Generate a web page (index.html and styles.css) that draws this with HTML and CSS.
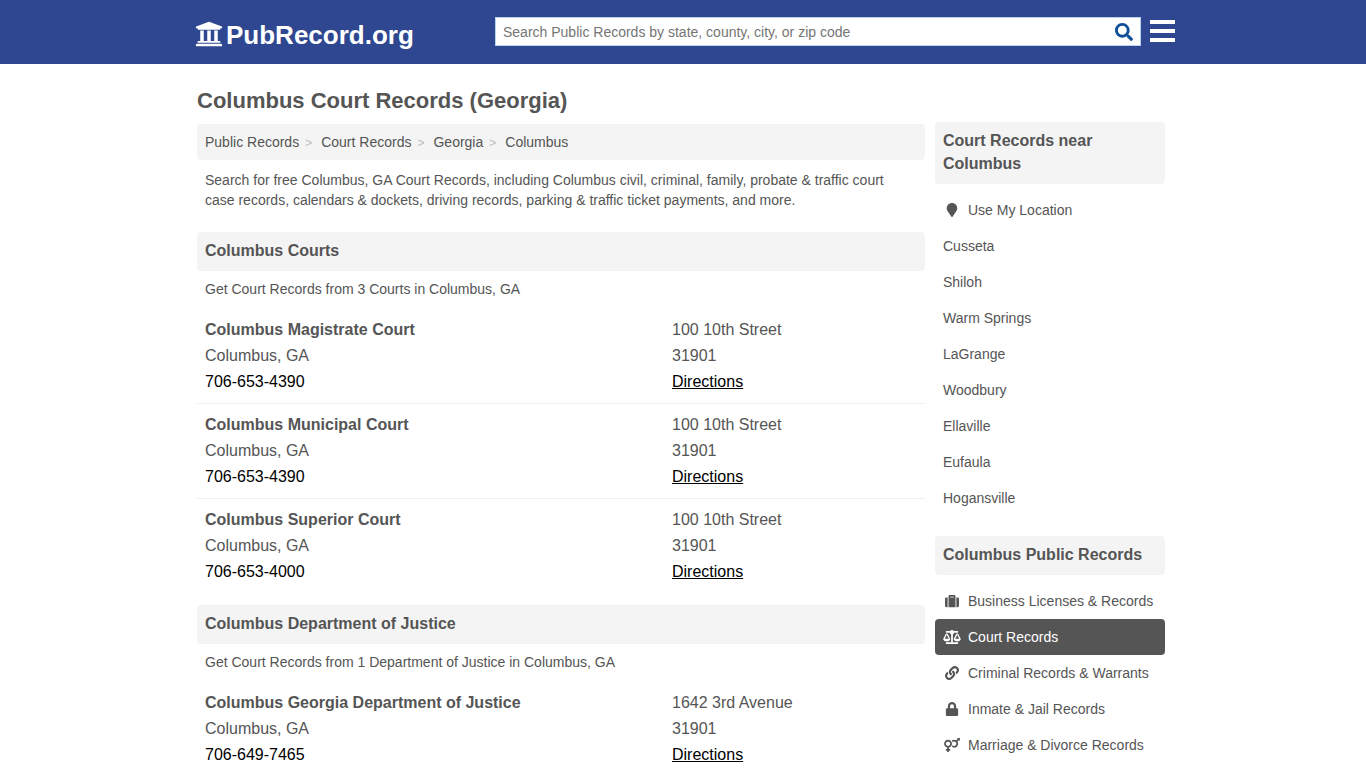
FILE: index.html
```html
<!DOCTYPE html>
<html lang="en">
<head>
<meta charset="utf-8">
<title>Columbus Court Records (Georgia)</title>
<meta name="viewport" content="width=device-width, initial-scale=1">
<link rel="stylesheet" href="styles.css">
</head>
<body>
<header class="site-header">
  <div class="header-inner">
    <a class="logo" href="#">
      <svg class="logo-icon" viewBox="0 0 512 512" aria-hidden="true"><path d="M496 128v16a8 8 0 0 1-8 8h-24v12c0 6.627-5.373 12-12 12H60c-6.627 0-12-5.373-12-12v-12H24a8 8 0 0 1-8-8v-16a8 8 0 0 1 4.941-7.392l232-88a7.996 7.996 0 0 1 6.118 0l232 88A8 8 0 0 1 496 128zm-24 304H40c-13.255 0-24 10.745-24 24v16a8 8 0 0 0 8 8h464a8 8 0 0 0 8-8v-16c0-13.255-10.745-24-24-24zM96 192v192H60c-6.627 0-12 5.373-12 12v20h416v-20c0-6.627-5.373-12-12-12h-36V192h-64v192h-64V192h-64v192h-64V192H96z"/></svg>
      <span>PubRecord.org</span>
    </a>
    <form class="search" role="search">
      <input class="search-input" type="text" aria-label="Search Public Records" placeholder="Search Public Records by state, county, city, or zip code">
      <button class="search-button" type="button" aria-label="Search">
        <svg class="search-icon" viewBox="0 0 512 512" aria-hidden="true"><path d="M505 442.7L405.3 343c-4.5-4.5-10.6-7-17-7H372c27.6-35.3 44-79.7 44-128C416 93.1 322.9 0 208 0S0 93.1 0 208s93.1 208 208 208c48.3 0 92.7-16.4 128-44v16.3c0 6.4 2.5 12.5 7 17l99.7 99.7c9.4 9.4 24.6 9.4 33.9 0l28.3-28.3c9.4-9.4 9.4-24.6.1-34zM208 336c-70.7 0-128-57.2-128-128 0-70.7 57.2-128 128-128 70.7 0 128 57.2 128 128 0 70.7-57.2 128-128 128z"/></svg>
      </button>
    </form>
    <button class="menu-button" type="button" aria-label="Menu">
      <svg class="menu-icon" viewBox="0 0 25 22" aria-hidden="true"><path d="M0 0h25v4H0zM0 9h25v4H0zM0 18h25v4H0z"/></svg>
    </button>
  </div>
</header>

<div class="page">
  <main class="main">
    <h1 class="title">Columbus Court Records (Georgia)</h1>
    <nav class="breadcrumb" aria-label="Breadcrumb">
      <a href="#">Public Records</a>
      <a href="#">Court Records</a>
      <a href="#">Georgia</a>
      <a href="#">Columbus</a>
    </nav>
    <p class="text">Search for free Columbus, GA Court Records, including Columbus civil, criminal, family, probate &amp; traffic court case records, calendars &amp; dockets, driving records, parking &amp; traffic ticket payments, and more.</p>

    <section class="section">
      <h2 class="heading">Columbus Courts</h2>
      <p class="text">Get Court Records from 3 Courts in Columbus, GA</p>
      <div class="listing">
        <article class="entry">
          <div><h3 class="name">Columbus Magistrate Court</h3><p>Columbus, GA</p><a class="phone" href="#">706-653-4390</a></div>
          <div><p>100 10th Street</p><p>31901</p><a class="directions" href="#">Directions</a></div>
        </article>
        <article class="entry">
          <div><h3 class="name">Columbus Municipal Court</h3><p>Columbus, GA</p><a class="phone" href="#">706-653-4390</a></div>
          <div><p>100 10th Street</p><p>31901</p><a class="directions" href="#">Directions</a></div>
        </article>
        <article class="entry">
          <div><h3 class="name">Columbus Superior Court</h3><p>Columbus, GA</p><a class="phone" href="#">706-653-4000</a></div>
          <div><p>100 10th Street</p><p>31901</p><a class="directions" href="#">Directions</a></div>
        </article>
      </div>
    </section>

    <section class="section">
      <h2 class="heading">Columbus Department of Justice</h2>
      <p class="text">Get Court Records from 1 Department of Justice in Columbus, GA</p>
      <div class="listing">
        <article class="entry">
          <div><h3 class="name">Columbus Georgia Department of Justice</h3><p>Columbus, GA</p><a class="phone" href="#">706-649-7465</a></div>
          <div><p>1642 3rd Avenue</p><p>31901</p><a class="directions" href="#">Directions</a></div>
        </article>
      </div>
    </section>
  </main>

  <aside class="sidebar">
    <section>
      <h2 class="heading">Court Records near Columbus</h2>
      <nav class="links" aria-label="Nearby places">
        <a class="link" href="#"><svg class="icon" viewBox="-64 0 512 512" aria-hidden="true"><path d="M172.268 501.67C26.97 291.031 0 269.413 0 192 0 85.961 85.961 0 192 0s192 85.961 192 192c0 77.413-26.97 99.031-172.268 309.67-9.535 13.774-29.93 13.773-39.464 0z"/></svg>Use My Location</a>
        <a class="link" href="#">Cusseta</a>
        <a class="link" href="#">Shiloh</a>
        <a class="link" href="#">Warm Springs</a>
        <a class="link" href="#">LaGrange</a>
        <a class="link" href="#">Woodbury</a>
        <a class="link" href="#">Ellaville</a>
        <a class="link" href="#">Eufaula</a>
        <a class="link" href="#">Hogansville</a>
      </nav>
    </section>
    <section>
      <h2 class="heading">Columbus Public Records</h2>
      <nav class="links" aria-label="Public records">
        <a class="link" href="#"><svg class="icon" viewBox="0 0 512 512" aria-hidden="true"><path d="M128 480h256V80c0-26.5-21.5-48-48-48H176c-26.5 0-48 21.5-48 48v400zm64-384h128v32H192V96zm320 80v256c0 26.5-21.5 48-48 48h-48V128h48c26.5 0 48 21.5 48 48zM96 480H48c-26.5 0-48-21.5-48-48V176c0-26.5 21.5-48 48-48h48v352z"/></svg>Business Licenses &amp; Records</a>
        <a class="link link-active" href="#" aria-current="page"><svg class="icon" viewBox="0 0 640 512" aria-hidden="true"><path d="M256 336h-.02c0-16.18 1.34-8.73-85.05-181.51-17.65-35.29-68.19-35.36-85.87 0C-2.06 328.75.02 320.33.02 336H0c0 44.18 57.31 80 128 80s128-35.82 128-80zM128 176l72 144H56l72-144zm511.98 160c0-16.18 1.34-8.73-85.05-181.51-17.65-35.29-68.19-35.36-85.87 0-87.12 174.26-85.04 165.84-85.04 181.51H384c0 44.18 57.31 80 128 80s128-35.82 128-80h-.02zM440 320l72-144 72 144H440zm88 128H352V153.25c23.51-10.29 41.16-31.48 46.39-57.25H528c8.84 0 16-7.16 16-16V48c0-8.84-7.16-16-16-16H383.64C369.04 12.68 346.09 0 320 0s-49.04 12.68-63.64 32H112c-8.84 0-16 7.16-16 16v32c0 8.84 7.16 16 16 16h129.61c5.23 25.76 22.87 46.96 46.39 57.25V448H112c-8.84 0-16 7.16-16 16v32c0 8.84 7.16 16 16 16h416c8.84 0 16-7.16 16-16v-32c0-8.84-7.16-16-16-16z"/></svg>Court Records</a>
        <a class="link" href="#"><svg class="icon" viewBox="0 0 512 512" aria-hidden="true"><path d="M326.612 185.391c59.747 59.809 58.927 155.698.36 214.59-.11.12-.24.25-.36.37l-67.2 67.2c-59.27 59.27-155.699 59.262-214.96 0-59.27-59.26-59.27-155.7 0-214.96l37.106-37.106c9.84-9.84 26.786-3.3 27.294 10.606.648 17.722 3.826 35.527 9.69 52.721 1.986 5.822.567 12.262-3.783 16.612l-13.087 13.087c-28.026 28.026-28.905 73.66-1.155 101.96 28.024 28.579 74.086 28.749 102.325.51l67.2-67.19c28.191-28.191 28.073-73.757 0-101.83-3.701-3.694-7.429-6.564-10.341-8.569a16.037 16.037 0 0 1-6.947-12.606c-.396-10.567 3.348-21.456 11.698-29.806l21.054-21.055c5.521-5.521 14.182-6.199 20.584-1.731a152.482 152.482 0 0 1 20.522 17.197zM467.547 44.449c-59.261-59.262-155.69-59.27-214.96 0l-67.2 67.2c-.12.12-.25.25-.36.37-58.566 58.892-59.387 154.781.36 214.59a152.454 152.454 0 0 0 20.521 17.196c6.402 4.468 15.064 3.789 20.584-1.731l21.054-21.055c8.35-8.35 12.094-19.239 11.698-29.806a16.037 16.037 0 0 0-6.947-12.606c-2.912-2.005-6.64-4.875-10.341-8.569-28.073-28.073-28.191-73.639 0-101.83l67.2-67.19c28.239-28.239 74.3-28.069 102.325.51 27.75 28.3 26.872 73.934-1.155 101.96l-13.087 13.087c-4.35 4.35-5.769 10.79-3.783 16.612 5.864 17.194 9.042 34.999 9.69 52.721.509 13.906 17.454 20.446 27.294 10.606l37.106-37.106c59.271-59.259 59.271-155.699.001-214.959z"/></svg>Criminal Records &amp; Warrants</a>
        <a class="link" href="#"><svg class="icon" viewBox="-32 0 512 512" aria-hidden="true"><path d="M400 224h-24v-72C376 68.2 307.8 0 224 0S72 68.2 72 152v72H48c-26.5 0-48 21.5-48 48v192c0 26.5 21.5 48 48 48h352c26.5 0 48-21.5 48-48V272c0-26.5-21.5-48-48-48zm-104 0H152v-72c0-39.7 32.3-72 72-72s72 32.3 72 72v72z"/></svg>Inmate &amp; Jail Records</a>
        <a class="link" href="#"><svg class="icon" viewBox="0 0 576 512" aria-hidden="true"><path d="M564 0h-79c-10.7 0-16 12.9-8.5 20.5l16.9 16.9-48.7 48.7C422.5 72.1 396.2 64 368 64c-33.7 0-64.6 11.6-89.2 30.9 14 16.7 25 36 32.1 57.1 14.5-14.8 34.7-24 57.1-24 44.1 0 80 35.9 80 80s-35.9 80-80 80c-22.3 0-42.6-9.2-57.1-24-7.1 21.1-18 40.4-32.1 57.1 24.5 19.4 55.5 30.9 89.2 30.9 79.5 0 144-64.5 144-144 0-28.2-8.1-54.5-22.1-76.7l48.7-48.7 16.9 16.9c2.4 2.4 5.4 3.5 8.4 3.5 6.2 0 12.1-4.8 12.1-12V12c0-6.6-5.4-12-12-12zM144 64C64.5 64 0 128.5 0 208c0 68.5 47.9 125.9 112 140.4V400H76c-6.600 0-12 5.400-12 12v40c0 6.600 5.400 12 12 12h36v36c0 6.600 5.400 12 12 12h40c6.600 0 12-5.400 12-12v-36h36c6.600 0 12-5.400 12-12v-40c0-6.600-5.400-12-12-12h-36v-51.600c64.100-14.600 112-71.900 112-140.400 0-79.500-64.500-144-144-144zm0 224c-44.100 0-80-35.900-80-80s35.900-80 80-80 80 35.900 80 80-35.900 80-80 80z"/></svg>Marriage &amp; Divorce Records</a>
      </nav>
    </section>
  </aside>
</div>
</body>
</html>
```
FILE: styles.css
```css
* {
  box-sizing: border-box;
}

body {
  margin: 0;
  background: #fff;
  color: #555;
  font-family: "Liberation Sans", Arial, sans-serif;
  font-size: 14px;
  line-height: 20px;
}

h1, h2, h3, p {
  margin: 0;
}

a {
  color: inherit;
  text-decoration: none;
}

button {
  padding: 0;
  border: 0;
  background: none;
  cursor: pointer;
}

svg {
  display: block;
  flex: none;
  fill: currentColor;
}

.site-header {
  background: #2e4790;
}

.header-inner {
  display: flex;
  align-items: flex-start;
  max-width: 984px;
  margin: 0 auto;
  padding: 17px 0 13px 4px;
}

.logo {
  display: flex;
  flex: 1;
  align-items: flex-start;
  gap: 3px;
  padding-top: 3px;
  color: #fff;
  font-size: 26px;
  font-weight: bold;
  line-height: 31px;
}

.logo-icon {
  width: 28px;
  height: 28px;
}

.search {
  display: flex;
  flex: 0 1 646px;
  height: 29px;
  background: #fff;
  border: 1px solid #bcd3ee;
}

.search-input {
  flex: 1;
  min-width: 0;
  padding: 0 7px;
  border: 0;
  background: none;
  color: #555;
  font: inherit;
}

.search-input::placeholder {
  color: #757575;
  opacity: 1;
}

.search-button {
  padding: 0 7px;
  color: #0e4f98;
}

.search-icon {
  width: 18px;
  height: 18px;
}

.menu-button {
  margin-left: 9px;
  padding-top: 3px;
  color: #fff;
}

.menu-icon {
  width: 25px;
  height: 22px;
}

.page {
  display: flex;
  align-items: flex-start;
  gap: 10px;
  max-width: 976px;
  margin: 0 auto;
  padding: 23px 6px 0 2px;
}

.main {
  flex: 1;
  min-width: 0;
}

.sidebar {
  flex: 0 0 230px;
  display: grid;
  gap: 20px;
  padding-top: 35px;
}

.title {
  margin-bottom: 9px;
  font-size: 22px;
  line-height: 28px;
}

.breadcrumb {
  display: flex;
  margin-bottom: 10px;
  padding: 8px;
  border-radius: 4px;
  background: #f4f4f4;
}

.breadcrumb a + a::before {
  content: ">";
  padding: 0 9px 0 6px;
  color: #bbb;
  font-size: 12px;
  line-height: 1;
}

.text {
  padding: 0 8px;
}

.section {
  padding-bottom: 12px;
}

.text + .section {
  padding-top: 22px;
}

.heading {
  margin-bottom: 8px;
  padding: 7px 8px 9px;
  border-radius: 4px;
  background: #f4f4f4;
  font-size: 16px;
  line-height: 23px;
}

.listing {
  margin-top: 10px;
}

.entry {
  display: grid;
  grid-template-columns: 467px 1fr;
  padding: 8px;
  font-size: 16px;
  line-height: 26px;
}

.entry + .entry {
  border-top: 1px solid #eee;
}

.name {
  font-size: 16px;
}

.phone,
.directions {
  color: #000;
}

.directions {
  text-decoration: underline;
}

.link {
  display: flex;
  align-items: center;
  gap: 7px;
  padding: 8px;
  border-radius: 4px;
}

.link-active {
  background: #555;
  color: #fff;
}

.icon {
  width: 18px;
  height: 14px;
}
```
